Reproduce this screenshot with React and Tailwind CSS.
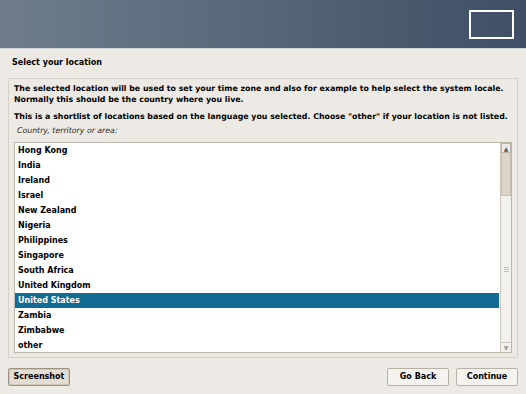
import React from 'react';

const countries = [
	'Hong Kong',
	'India',
	'Ireland',
	'Israel',
	'New Zealand',
	'Nigeria',
	'Philippines',
	'Singapore',
	'South Africa',
	'United Kingdom',
	'United States',
	'Zambia',
	'Zimbabwe',
	'other',
];

const App = () => {
	const selected = 'United States';

	return (
		<div className="w-[526px] h-[394px] flex flex-col bg-[#edeae5] text-black overflow-hidden" style={{ fontFamily: '"DejaVu Sans", sans-serif' }}>
			{/* banner */}
			<div className="h-[49px] flex justify-end items-start pt-[10px] pr-[12px] bg-gradient-to-r from-[#6f7d8b] via-[#566779] to-[#3e4f66] border-b border-[#cfd3d6]">
				<div className="w-[45px] h-[29px] border-2 border-white"></div>
			</div>

			<div className="px-[12px] pt-[8px] h-[21px] text-[8px] font-bold">Select your location</div>

			<div className="mx-[8px] mt-[8px] h-[280px] border border-[#d6d1c8] bg-[#edeae5] px-[5px] pt-[4px] flex flex-col">
				<p className="text-[7.85px] font-bold leading-[11px] whitespace-nowrap">
					The selected location will be used to set your time zone and also for example to help select the system locale.
					<br />
					Normally this should be the country where you live.
				</p>
				<p className="text-[7.85px] font-bold leading-[11px] mt-[6px] whitespace-nowrap">
					This is a shortlist of locations based on the language you selected. Choose "other" if your location is not listed.
				</p>
				<p className="text-[7.8px] italic leading-[11px] mt-[3px] pl-[3px] text-[#2a2a2a]">Country, territory or area:</p>

				<div className="mt-[6px] h-[211px] flex border border-[#bdb6ab] bg-white">
					<ul className="flex-1 pr-[1px]">
						{countries.map((c) => (
							<li
								key={c}
								className={`h-[15px] leading-[15px] pl-[3px] text-[8px] font-bold ${c === selected ? 'bg-[#126c92] text-white' : ''}`}
							>
								{c}
							</li>
						))}
					</ul>
					<div className="w-[11px] flex flex-col bg-[#f3f1ee] border-l border-[#cfc8bd]">
						<div className="h-[10px] flex items-center justify-center border border-[#bdb4a6] bg-[#eeebe6] text-[6px] text-[#555]">▲</div>
						<div className="h-[43px] bg-[#ddd4c8] border-x border-b border-[#c9c0b3]"></div>
						<div className="flex-1 flex items-center justify-center">
							<div className="w-[5px] flex flex-col gap-[1px]">
								<div className="h-px bg-[#c5beb3]"></div>
								<div className="h-px bg-[#c5beb3]"></div>
								<div className="h-px bg-[#c5beb3]"></div>
							</div>
						</div>
						<div className="h-[10px] flex items-center justify-center border-t border-[#cfc8bd] text-[6px] text-[#999]">▼</div>
					</div>
				</div>
			</div>

			<div className="flex items-center justify-between px-[8px] mt-[10px]">
				<button className="h-[18px] w-[62px] text-[8px] font-bold border border-[#9d9483] bg-[#e3ddd3] rounded-[2px] shadow-[inset_0_0_0_1px_#cfc6b8]">
					Screenshot
				</button>
				<div className="flex gap-[7px]">
					<button className="h-[18px] w-[62px] text-[8px] font-bold border border-[#b8b1a6] bg-[#f5f3f0] rounded-[2px]">
						Go Back
					</button>
					<button className="h-[18px] w-[62px] text-[8px] font-bold border border-[#b8b1a6] bg-[#f5f3f0] rounded-[2px]">
						Continue
					</button>
				</div>
			</div>
		</div>
	);
};

export default App;
